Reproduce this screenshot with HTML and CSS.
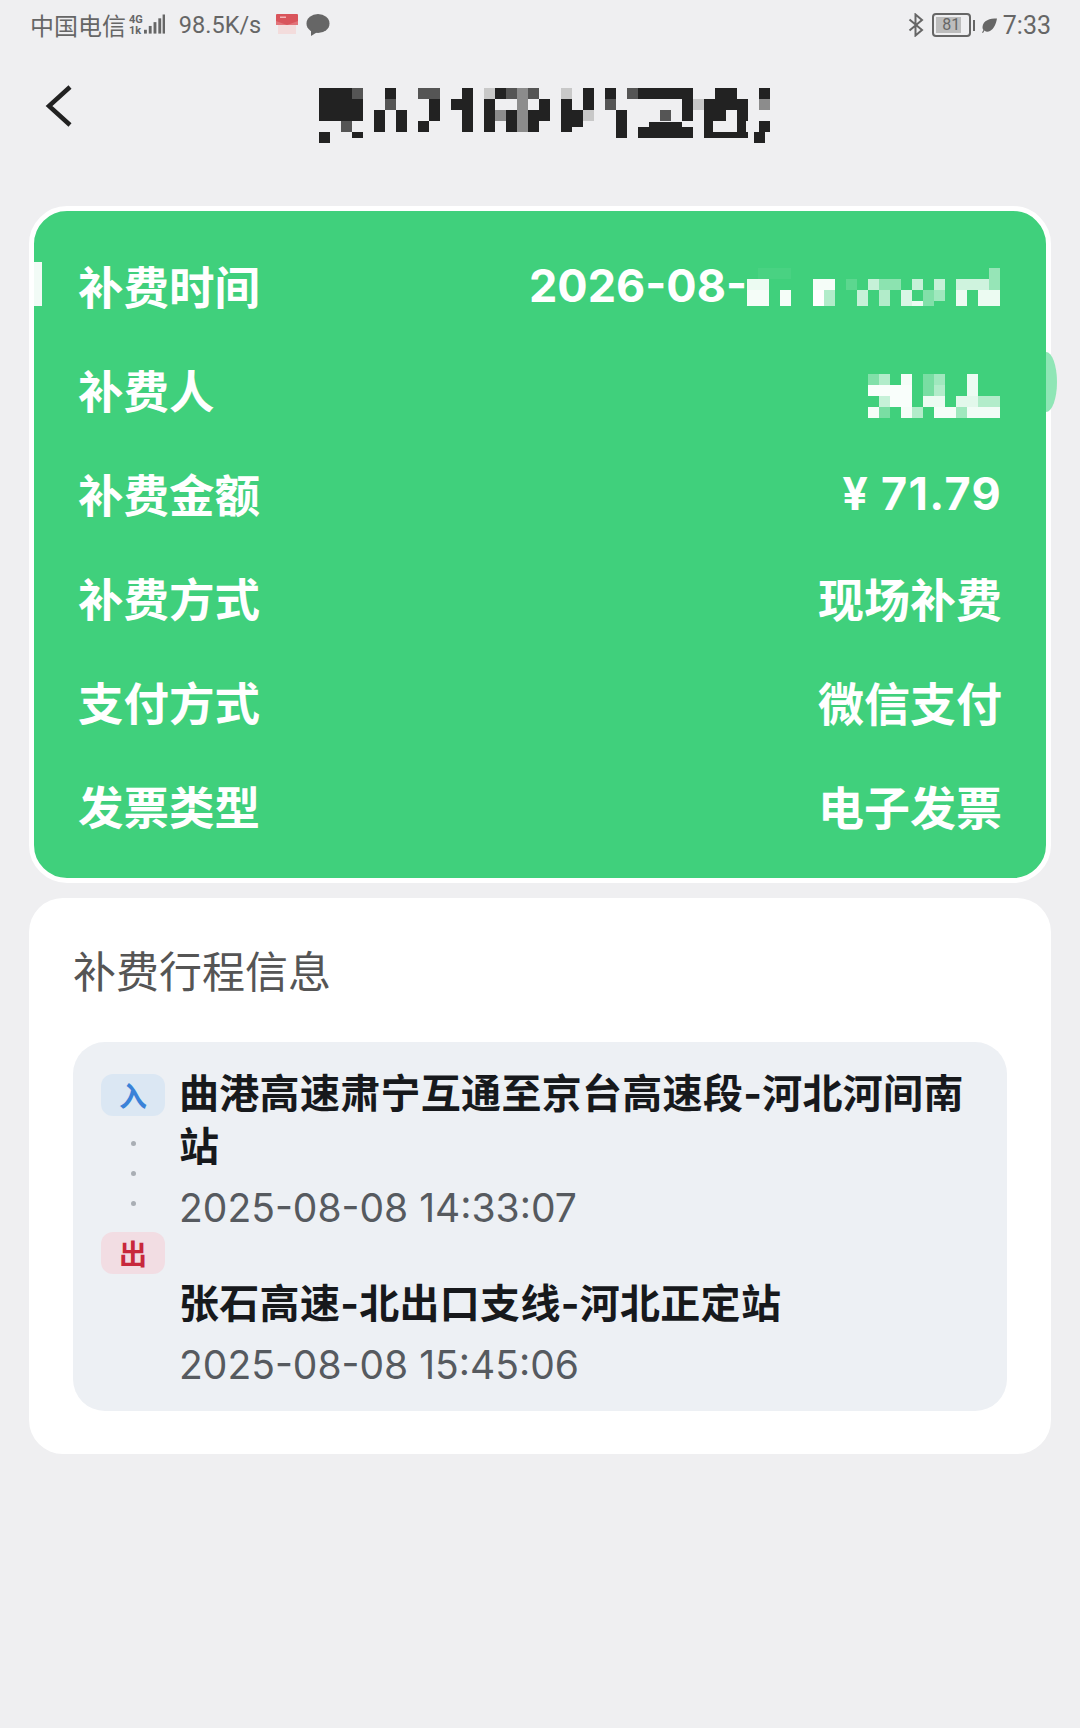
FILE: index.html
```html
<!DOCTYPE html>
<html lang="zh-CN">

<head>
    <meta charset="UTF-8">
    <meta name="viewport" content="width=device-width, initial-scale=1.0">
    <title>补费详情</title>
    <link rel="stylesheet" href="styles.css">
</head>

<body>

    <div class="statusbar">
        <div class="status-left">
            <span class="carrier">中国电信</span>
            <span class="net-type"><span>4G</span><span>1k</span></span>
            <svg class="signal" width="21" height="24" viewBox="0 0 22 24">
                <g fill="#666">
                    <rect x="0" y="17" width="3" height="4"/>
                    <rect x="5" y="13" width="3" height="8"/>
                    <rect x="10" y="9" width="3" height="12"/>
                    <rect x="15" y="5" width="3" height="16"/>
                    <rect x="19.500" y="1" width="2.500" height="20"/>
                </g>
            </svg>
            <span class="speed">98.5K/s</span>
            <svg class="mail-icon" width="24" height="24" viewBox="0 0 24 24">
                <rect x="1" y="1" width="22" height="11" rx="1" fill="#d9545b"/>
                <path d="M1 8l11 4 11-4v4H1z" fill="#e2747a"/>
                <rect x="3" y="12" width="18" height="9" fill="#f3dcdc"/>
                <rect x="5" y="3.500" width="6" height="1.500" fill="#f2b6b8"/>
            </svg>
            <svg class="chat-icon" width="24" height="24" viewBox="0 0 24 24">
                <ellipse cx="12" cy="10.500" rx="11.500" ry="9.500" fill="#666"/>
                <path d="M5 16l0 7 8-5z" fill="#666"/>
            </svg>
        </div>
        <div class="status-right">
            <svg class="bt-icon" width="16" height="24" viewBox="0 0 16 24">
                <path d="M1.500 6.500L14 17l-6.500 5.500V1.500L14 7 1.500 17.500" fill="none" stroke="#666" stroke-width="2"/>
            </svg>
            <div class="battery">
                <div class="battery-body"><span class="battery-fill"></span><span class="battery-num">81</span></div>
                <span class="battery-cap"></span>
            </div>
            <svg class="leaf-icon" width="15" height="15" viewBox="0 0 15 15">
                <path d="M15 0.500C8 0.500 1 2 0.500 9c0 1.500 0.500 2.500 1 3L0 14.500l1 0.500 1.500-2.500C4 14 6 14 8 13c4-2 6-7 7-12.500z" fill="#666"/>
            </svg>
            <span class="clock">7:33</span>
        </div>
    </div>

    <div class="topbar">
        <svg class="back-icon" width="28" height="44" viewBox="0 0 28 44">
            <path d="M25 2L4 21l21 19" fill="none" stroke="#222" stroke-width="4.500"/>
        </svg>
        <!-- title is pixelated in the picture -->
        <svg class="title-mosaic" width="462" height="60" viewBox="0 0 42 5.450" shape-rendering="crispEdges">
            <g fill="#222">
                <rect x="0" y="0" width="3" height="3"/>
                <rect x="3" y="1" width="1" height="2"/>
                <rect x="6" y="0" width="1" height="1"/>
                <rect x="5" y="2" width="1" height="2"/>
                <rect x="7" y="2" width="1" height="2"/>
                <rect x="10" y="1" width="1" height="2"/>
                <rect x="9" y="3" width="1" height="1"/>
                <rect x="13" y="0" width="1" height="4"/>
                <rect x="12" y="1" width="1" height="1"/>
                <rect x="15" y="1" width="1" height="3"/>
                <rect x="16" y="0" width="1" height="1"/>
                <rect x="17" y="2" width="1" height="2"/>
                <rect x="20" y="1" width="1" height="2"/>
                <rect x="19" y="2" width="1" height="2"/>
                <rect x="22" y="1" width="1" height="3"/>
                <rect x="23" y="2" width="1" height="1.500"/>
                <rect x="24" y="0" width="1" height="2"/>
                <rect x="26" y="0" width="1" height="1"/>
                <rect x="27" y="2" width="1" height="2.500"/>
                <rect x="29" y="0" width="5" height="1"/>
                <rect x="33" y="1" width="1" height="2"/>
                <rect x="29" y="3.500" width="5" height="1"/>
                <rect x="30" y="3.100" width="3" height="0.500"/>
                <rect x="36" y="0" width="2" height="1"/>
                <rect x="35" y="1" width="4" height="1"/>
                <rect x="35" y="2" width="2" height="1"/>
                <rect x="38" y="2" width="1" height="1"/>
                <rect x="35" y="3" width="0.800" height="1"/>
                <rect x="38" y="3" width="0.800" height="1"/>
                <rect x="35" y="4" width="4" height="0.500"/>
                <rect x="40" y="0" width="1" height="1"/>
                <rect x="0" y="4" width="1" height="1"/>
                <rect x="3" y="4" width="1" height="0.500"/>
                <rect x="39.500" y="4" width="1" height="1"/>
                <rect x="40" y="3" width="1" height="1"/>
            </g>
            <g fill="#555">
                <rect x="3" y="0" width="1" height="1"/>
                <rect x="2" y="3" width="1" height="1"/>
                <rect x="6" y="1" width="1" height="1"/>
                <rect x="9" y="0" width="2" height="1"/>
                <rect x="17" y="0" width="1" height="1"/>
                <rect x="19" y="0" width="1" height="1"/>
                <rect x="26" y="1" width="1" height="1"/>
                <rect x="28" y="0" width="1" height="1"/>
                <rect x="31" y="2" width="1" height="1"/>
            </g>
            <g fill="#8c8c8c">
                <rect x="18" y="0" width="1" height="4"/>
                <rect x="16" y="2" width="1" height="1"/>
                <rect x="40" y="1" width="1" height="1"/>
            </g>
            <g fill="#c8c8c8">
                <rect x="15" y="0" width="1" height="1"/>
                <rect x="22" y="0" width="1" height="1"/>
                <rect x="24" y="2" width="1" height="1"/>
                <rect x="34" y="1" width="1" height="1"/>
            </g>
        </svg>
    </div>

    <div class="fee-card">
        <span class="side-tab"></span>
        <span class="side-bump"></span>
        <div class="fee-row">
            <span>补费时间</span>
            <span class="fee-date">2026-08-
                <svg class="date-mosaic" width="253" height="38" viewBox="0 0 23 3.450" shape-rendering="crispEdges">
                    <g fill="#fff">
                        <rect x="0" y="1" width="2" height="1" fill-opacity=".9"/>
                        <rect x="0" y="2" width="2" height="1.450" fill-opacity=".95"/>
                        <rect x="3" y="2" width="1" height="1.450" fill-opacity=".95"/>
                        <rect x="6" y="1" width="2" height="1" fill-opacity=".95"/>
                        <rect x="6" y="2" width="1" height="1.450"/>
                        <rect x="7" y="2" width="1" height="1.450" fill-opacity=".6"/>
                        <rect x="1" y="0" width="3" height="1" fill-opacity=".05"/>
                        <rect x="9" y="1" width="1" height="1" fill-opacity=".15"/>
                        <rect x="10" y="2" width="1" height="1.450" fill-opacity=".7"/>
                        <rect x="11" y="1" width="1" height="1" fill-opacity=".7"/>
                        <rect x="12" y="2" width="1" height="1.450" fill-opacity=".6"/>
                        <rect x="12" y="1" width="2" height="1" fill-opacity=".4"/>
                        <rect x="14" y="2" width="1" height="1.450" fill-opacity=".8"/>
                        <rect x="15" y="1" width="1" height="1" fill-opacity=".7"/>
                        <rect x="15" y="3" width="1" height="0.450" fill-opacity=".9"/>
                        <rect x="16" y="2" width="1" height="1.450" fill-opacity=".35"/>
                        <rect x="17" y="1" width="1" height="1" fill-opacity=".7"/>
                        <rect x="17" y="2" width="1" height="1" fill-opacity=".5"/>
                        <rect x="19" y="1" width="3" height="1" fill-opacity=".75"/>
                        <rect x="19" y="2" width="1" height="1.450" fill-opacity=".9"/>
                        <rect x="21" y="2" width="2" height="1.450" fill-opacity=".9"/>
                        <rect x="22" y="0" width="1" height="2" fill-opacity=".45"/>
                    </g>
                </svg>
            </span>
        </div>
        <div class="fee-row">
            <span>补费人</span>
            <svg class="name-mosaic" width="132" height="44" viewBox="0 0 12 4" shape-rendering="crispEdges">
                <g fill="#fff">
                    <rect x="0" y="0" width="1" height="1" fill-opacity=".35"/>
                    <rect x="1" y="0" width="1" height="1" fill-opacity=".6"/>
                    <rect x="3" y="0" width="1" height="1" fill-opacity=".95"/>
                    <rect x="5" y="0" width="1" height="1" fill-opacity=".3"/>
                    <rect x="6" y="0" width="1" height="1" fill-opacity=".5"/>
                    <rect x="9" y="0" width="1" height="1" fill-opacity=".9"/>
                    <rect x="0" y="1" width="4" height="1" fill-opacity=".97"/>
                    <rect x="5" y="1" width="1" height="1" fill-opacity=".3"/>
                    <rect x="6" y="1" width="1" height="1" fill-opacity=".6"/>
                    <rect x="9" y="1" width="1" height="1" fill-opacity=".9"/>
                    <rect x="1" y="2" width="1" height="1" fill-opacity=".7"/>
                    <rect x="2" y="2" width="2" height="1" fill-opacity=".97"/>
                    <rect x="5" y="2" width="2" height="1" fill-opacity=".9"/>
                    <rect x="8" y="2" width="2" height="1" fill-opacity=".85"/>
                    <rect x="10" y="2" width="2" height="1" fill-opacity=".6"/>
                    <rect x="0" y="3" width="1" height="1" fill-opacity=".95"/>
                    <rect x="1" y="3" width="1" height="1" fill-opacity=".3"/>
                    <rect x="3" y="3" width="1" height="1" fill-opacity=".95"/>
                    <rect x="4" y="3" width="1" height="1" fill-opacity=".6"/>
                    <rect x="6" y="3" width="2" height="1" fill-opacity=".95"/>
                    <rect x="8" y="3" width="1" height="1" fill-opacity=".5"/>
                    <rect x="9" y="3" width="3" height="1" fill-opacity=".93"/>
                </g>
            </svg>
        </div>
        <div class="fee-row"><span>补费金额</span><span class="fee-amount">¥ 71.79</span></div>
        <div class="fee-row"><span>补费方式</span><span class="fee-value">现场补费</span></div>
        <div class="fee-row"><span>支付方式</span><span class="fee-value">微信支付</span></div>
        <div class="fee-row"><span>发票类型</span><span class="fee-value">电子发票</span></div>
    </div>

    <div class="trip-card">
        <h2 class="trip-title">补费行程信息</h2>
        <div class="trip-panel">
            <div class="trip-line">
                <span class="badge badge-in">入</span>
                <span class="dot"></span>
                <span class="dot"></span>
                <span class="dot"></span>
                <span class="badge badge-out">出</span>
            </div>
            <div class="trip-stops">
                <div class="stop">
                    <div class="stop-name">曲港高速肃宁互通至京台高速段-河北河间南站</div>
                    <div class="stop-time">2025-08-08 14:33:07</div>
                </div>
                <div class="stop">
                    <div class="stop-name">张石高速-北出口支线-河北正定站</div>
                    <div class="stop-time">2025-08-08 15:45:06</div>
                </div>
            </div>
        </div>
    </div>

</body>

</html>
```

FILE: styles.css
```css
body {
    margin: 0;
    min-height: 1728px;
    background: #efeff1;
    font-family: "Noto Sans CJK SC", "Noto Sans", sans-serif;
    overflow: hidden;
}

.statusbar {
    height: 50px;
    padding: 0 29px 0 30px;
    display: flex;
    align-items: center;
    justify-content: space-between;
    color: #666;
    font-size: 24px;
}

.status-left,
.status-right {
    display: flex;
    align-items: center;
}

.carrier {
    line-height: 30px;
}

.net-type {
    display: flex;
    flex-direction: column;
    margin-left: 3px;
    font-family: Roboto, sans-serif;
    font-size: 11px;
    font-weight: 700;
    line-height: 11px;
}

.signal {
    margin-left: 1px;
}

.speed {
    margin-left: 14px;
    font-family: Roboto, sans-serif;
    font-size: 23.500px;
}

.mail-icon {
    margin-left: 14px;
}

.chat-icon {
    margin-left: 7px;
}

.bt-icon {
    margin-right: 8px;
}

.battery {
    display: flex;
    align-items: center;
    margin-right: 7px;
}

.battery-body {
    position: relative;
    width: 35px;
    height: 20px;
    border: 2px solid #666;
    border-radius: 4px;
    text-align: center;
    font-family: Roboto, sans-serif;
    font-size: 16px;
    line-height: 20px;
}

.battery-fill {
    position: absolute;
    left: 2px;
    top: 2px;
    bottom: 2px;
    width: 25px;
    background: #bdbdbd;
}

.battery-num {
    position: relative;
}

.battery-cap {
    width: 2px;
    height: 11px;
    margin-left: 2px;
    background: #666;
}

.clock {
    margin-left: 6px;
    font-family: Roboto, sans-serif;
    font-size: 25px;
}

.topbar {
    height: 156px;
    display: flex;
    align-items: flex-start;
}

.back-icon {
    margin: 35px 0 0 45px;
}

.title-mosaic {
    margin: 38px 0 0 246px;
}

.fee-card {
    position: relative;
    margin: 0 29px;
    padding: 22px 44px 21px 44px;
    border: 5px solid #fff;
    border-radius: 38px;
    background: #40d07c;
    color: #fff;
    font-size: 45.500px;
    font-weight: 700;
}

.side-tab {
    position: absolute;
    left: 0;
    top: 51px;
    width: 8px;
    height: 44px;
    background: #f2fbf6;
}

.side-bump {
    position: absolute;
    right: -11px;
    top: 141px;
    width: 11px;
    height: 60px;
    border-radius: 0 100% 100% 0 / 0 50% 50% 0;
    background: #8fe6b6;
}

.fee-row {
    height: 104px;
    display: flex;
    align-items: center;
    justify-content: space-between;
}

.fee-value {
    font-size: 46px;
}

.fee-date {
    display: flex;
    align-items: center;
    font-family: Inter, sans-serif;
    font-size: 45px;
    font-weight: 700;
}

.date-mosaic {
    margin: 4px 2px 0 0;
}

.name-mosaic {
    margin: 14px 2px 0 0;
}

.fee-amount {
    font-family: Inter, sans-serif;
    font-size: 45px;
    letter-spacing: 1.300px;
}

.trip-card {
    margin: 15px 29px 0;
    height: 556px;
    box-sizing: border-box;
    padding: 44px 44px 0;
    border-radius: 34px;
    background: #fff;
}

.trip-title {
    margin: 0 0 46px;
    color: #555;
    font-size: 43px;
    font-weight: 400;
    line-height: 54px;
}

.trip-panel {
    height: 369px;
    box-sizing: border-box;
    padding: 23px 40px 0 28px;
    display: flex;
    border-radius: 32px;
    background: #edf0f4;
}

.trip-line {
    width: 64px;
    margin-top: 9px;
    flex-shrink: 0;
    display: flex;
    flex-direction: column;
    align-items: center;
}

.badge {
    width: 64px;
    height: 42px;
    border-radius: 12px;
    font-size: 28px;
    font-weight: 700;
    line-height: 42px;
    text-align: center;
}

.badge-in {
    margin-bottom: 25px;
    background: #dbe7f3;
    color: #3a82d8;
}

.badge-out {
    margin-top: 1px;
    background: #f2dde3;
    color: #c8283c;
}

.dot {
    width: 5px;
    height: 5px;
    margin-bottom: 25px;
    border-radius: 50%;
    background: #a9aeb4;
}

.trip-stops {
    margin-left: 14px;
    flex: 1;
}

.stop {
    margin-bottom: 37px;
}

.stop-name {
    padding-top: 2px;
    color: #17191c;
    font-family: Inter, "Noto Sans CJK SC", sans-serif;
    font-size: 40px;
    font-weight: 700;
    line-height: 53px;
    letter-spacing: .3px;
}

.stop-time {
    margin-top: 5px;
    color: #565a5f;
    font-family: Inter, sans-serif;
    font-size: 39px;
    line-height: 60px;
}
```
